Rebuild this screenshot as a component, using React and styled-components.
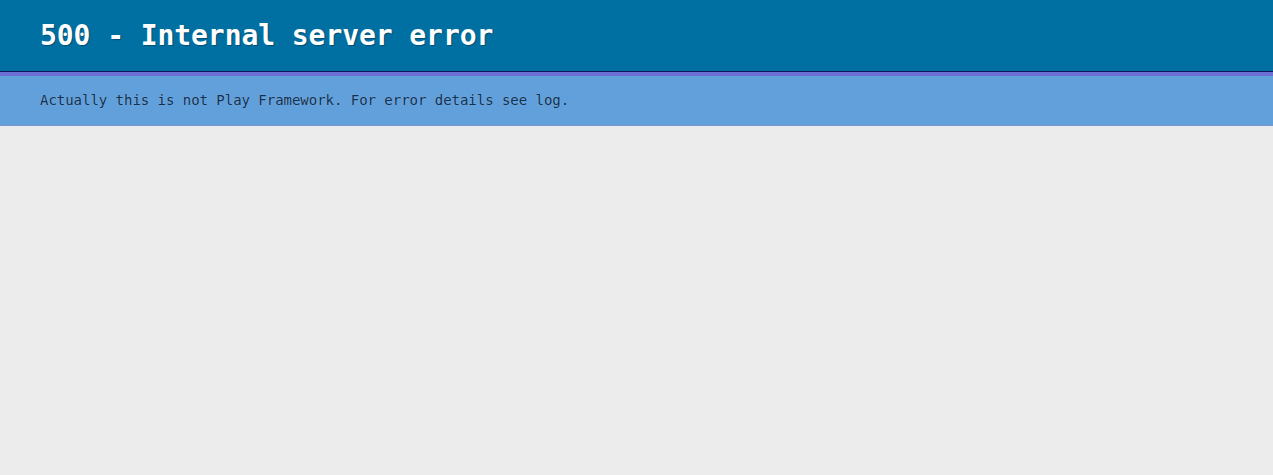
import React from 'react';
import styled, { createGlobalStyle } from 'styled-components';

const GlobalStyle = createGlobalStyle`
    html, body {
        margin: 0;
        padding: 0;
        background: #ececec;
        font-family: "DejaVu Sans Mono", "Liberation Mono", monospace;
    }
`

function App() {
    return (
        <Page>
            <GlobalStyle />
            <Title>500 - Internal server error</Title>
            <Detail>Actually this is not Play Framework. For error details see log.</Detail>
        </Page>
    )
}

export default App;

const Page = styled.div`
    min-height: 100vh;
    background: #ececec;
`

const Title = styled.h1`
    margin: 0;
    padding: 20px 40px;
    line-height: 31px;
    font-size: 28px;
    font-weight: bold;
    letter-spacing: -0.07px;
    background: #0070a3;
    color: #fff;
    text-shadow: 1px 1px 1px rgba(0, 0, 0, 0.3);
    border-bottom: 1px solid #11115e;
`

const Detail = styled.p`
    margin: 0;
    padding: 15px 40px;
    line-height: 19px;
    font-size: 14px;
    letter-spacing: -0.03px;
    background: #62a0db;
    color: #10304f;
    text-shadow: 0 0 1px rgba(255, 255, 255, 0.3);
    border-top: 4px solid #6d70d2;
    border-bottom: 1px solid #7795cf;
`
